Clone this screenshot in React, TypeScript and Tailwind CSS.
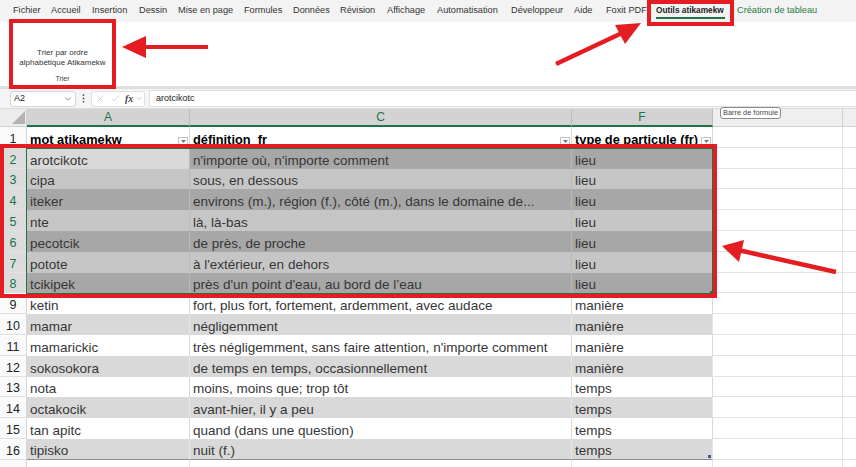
import React from "react";
import { ChevronDown, X, Check } from "lucide-react";

type Row = [string, string, string];

const data: Row[] = [
  ["arotcikotc", "n'importe où, n'importe comment", "lieu"],
  ["cipa", "sous, en dessous", "lieu"],
  ["iteker", "environs (m.), région (f.), côté (m.), dans le domaine de...", "lieu"],
  ["nte", "là, là-bas", "lieu"],
  ["pecotcik", "de près, de proche", "lieu"],
  ["potote", "à l'extérieur, en dehors", "lieu"],
  ["tcikipek", "près d'un point d'eau, au bord de l’eau", "lieu"],
  ["ketin", "fort, plus fort, fortement, ardemment, avec audace", "manière"],
  ["mamar", "négligemment", "manière"],
  ["mamarickic", "très négligemment, sans faire attention, n'importe comment", "manière"],
  ["sokosokora", "de temps en temps, occasionnellement", "manière"],
  ["nota", "moins, moins que; trop tôt", "temps"],
  ["octakocik", "avant-hier, il y a peu", "temps"],
  ["tan apitc", "quand (dans une question)", "temps"],
  ["tipisko", "nuit (f.)", "temps"],
];

const menu: { label: string; cls: string }[] = [
  { label: "Fichier", cls: "w-[38px]" },
  { label: "Accueil", cls: "w-[41px]" },
  { label: "Insertion", cls: "w-[47px]" },
  { label: "Dessin", cls: "w-[39px]" },
  { label: "Mise en page", cls: "w-[66px]" },
  { label: "Formules", cls: "w-[49px]" },
  { label: "Données", cls: "w-[47px]" },
  { label: "Révision", cls: "w-[47px]" },
  { label: "Affichage", cls: "w-[50px]" },
  { label: "Automatisation", cls: "w-[74px]" },
  { label: "Développeur", cls: "w-[63px]" },
  { label: "Aide", cls: "w-[32px]" },
  { label: "Foxit PDF", cls: "w-[50px]" },
];

function FilterBtn() {
  return (
    <div className="w-[10px] h-[10px] mb-[1px] mr-[1px] shrink-0 border border-[#c4c4c4] bg-white flex items-center justify-center">
      <svg width="5" height="3" viewBox="0 0 5 3">
        <path d="M0 0 L5 0 L2.5 3 Z" fill="#777" />
      </svg>
    </div>
  );
}

export default function App() {
  return (
    <div className="relative w-[856px] h-[467px] overflow-hidden bg-white font-['Liberation_Sans',Arial,sans-serif]">
      {/* Menu bar */}
      <div className="h-[22px] bg-[#f3f3f3] flex items-center pl-[13px] text-[9.2px] text-[#333] whitespace-nowrap">
        {menu.map((m) => (
          <div key={m.label} className={m.cls + " shrink-0"}>
            {m.label}
          </div>
        ))}
        <div className="w-[81px] shrink-0 relative">
          <span className="font-bold text-[8.3px] text-[#222]">Outils atikamekw</span>
          <div className="absolute left-0 w-[69px] top-[13px] h-[2px] bg-[#217346]" />
        </div>
        <div className="text-[#1e7b3f]">Création de tableau</div>
      </div>

      {/* Ribbon */}
      <div className="h-[64px] bg-white flex">
        <div className="ml-[10px] w-[105px] h-full flex flex-col items-center text-[#333]">
          <div className="mt-[26px] text-[8px] leading-[10px] text-center">
            Trier par ordre
            <br />
            alphabétique Atikamekw
          </div>
          <div className="mt-auto mb-[3px] text-[7px] leading-[8px] text-[#444]">Trier</div>
        </div>
      </div>
      <div className="h-[3px] bg-[#dedede]" />

      {/* Formula bar */}
      <div className="h-[20px] bg-[#f5f5f5] flex items-center pl-[10px] border-b border-[#dcdcdc]">
        <div className="w-[66px] h-[16px] bg-white border border-[#d6d6d6] rounded-[3px] flex items-center justify-between pl-[3px] pr-[2px] text-[9px] text-[#222]">
          <span>A2</span>
          <ChevronDown size={10} strokeWidth={1.6} color="#555" />
        </div>
        <div className="w-[15px] flex justify-center">
          <svg width="3" height="9" viewBox="0 0 3 9">
            <circle cx="1.5" cy="1.2" r="0.9" fill="#555" />
            <circle cx="1.5" cy="4.5" r="0.9" fill="#555" />
            <circle cx="1.5" cy="7.8" r="0.9" fill="#555" />
          </svg>
        </div>
        <div className="w-[54px] h-[16px] bg-white border border-[#e0e0e0] rounded-[3px] flex items-center pl-[1px]">
          <div className="w-[15px] flex justify-center">
            <X size={11} strokeWidth={1.2} color="#b5b5b5" />
          </div>
          <div className="w-[16px] flex justify-center">
            <Check size={11} strokeWidth={1.2} color="#b5b5b5" />
          </div>
          <div className="w-[13px] flex justify-center font-['Liberation_Serif',serif] italic font-bold text-[10px] text-[#444]">
            fx
          </div>
          <ChevronDown size={9} strokeWidth={1.4} color="#999" />
        </div>
        <div className="flex-1 ml-[4px] h-[17px] bg-white border-l border-y border-[#e0e0e0] flex items-center pl-[6px] text-[9px] text-[#222]">
          arotcikotc
        </div>
      </div>

      {/* Column headers */}
      <div className="h-[18px] flex text-[12px]">
        <div className="w-[27px] shrink-0 bg-[#ececec] border-r border-b border-[#cfcfcf] flex items-end justify-end pr-[1px] pb-[2px]">
          <svg width="13" height="13" viewBox="0 0 13 13">
            <path d="M13 0 L13 13 L0 13 Z" fill="#b3b3b3" />
          </svg>
        </div>
        <div className="w-[163px] shrink-0 bg-[#d3d3d3] border-r border-[#bdbdbd] border-b-2 border-b-[#217346] flex items-center justify-center text-[#217346]">
          A
        </div>
        <div className="w-[382px] shrink-0 bg-[#d3d3d3] border-r border-[#bdbdbd] border-b-2 border-b-[#217346] flex items-center justify-center text-[#217346]">
          C
        </div>
        <div className="w-[141px] shrink-0 bg-[#d3d3d3] border-r border-[#bdbdbd] border-b-2 border-b-[#217346] flex items-center justify-center text-[#217346]">
          F
        </div>
        <div className="w-[130px] shrink-0 bg-[#efefef] border-r border-b border-[#d0d0d0]" />
        <div className="flex-1 bg-[#efefef] border-b border-[#d0d0d0]" />
      </div>

      {/* Row 1: headers */}
      <div className="h-[20.8px] flex whitespace-nowrap">
        <div className="w-[27px] shrink-0 bg-[#fafafa] border-r border-b border-[#d6d6d6] flex items-end justify-center text-[12.5px] leading-[16px] text-[#222]">
          1
        </div>
        <div className="w-[163px] shrink-0 bg-white border-r border-[#d9d9d9] flex items-end justify-between pl-[3px] text-[12.8px] font-bold text-black">
          <span className="leading-[16px]">mot atikamekw</span>
          <FilterBtn />
        </div>
        <div className="w-[382px] shrink-0 bg-white border-r border-[#d9d9d9] flex items-end justify-between pl-[3px] text-[12.8px] font-bold text-black">
          <span className="leading-[16px]">définition_fr</span>
          <FilterBtn />
        </div>
        <div className="w-[141px] shrink-0 bg-white border-r border-[#d9d9d9] flex items-end justify-between pl-[3px] text-[12.8px] font-bold text-black">
          <span className="leading-[16px]">type de particule (fr)</span>
          <FilterBtn />
        </div>
        <div className="w-[130px] shrink-0 border-r border-b border-[#e3e3e3]" />
        <div className="flex-1 border-b border-[#e3e3e3]" />
      </div>

      {/* Data rows */}
      {data.map((r, i) => {
        const n = i + 2;
        const sel = n <= 8;
        const even = n % 2 === 0;
        let bg: string;
        let line: string;
        if (sel) {
          bg = even ? "bg-[#a7a7a7]" : "bg-[#c6c6c6]";
          line = "border-[#bababa]";
        } else {
          bg = even ? "bg-[#d9d9d9]" : "bg-white";
          line = even ? "border-[#e6e6e6]" : "border-[#d9d9d9]";
        }
        const aBg = n === 2 ? "bg-[#d9d9d9]" : bg;
        const last = n === 16 ? " border-b border-b-[#8c8c8c]" : "";
        const rh = sel
          ? "bg-[#dcdcdc] text-[#217346] border-r border-r-[#217346]"
          : "bg-[#fafafa] text-[#222] border-r border-r-[#d6d6d6]";
        return (
          <div key={n} className="h-[20.8px] flex text-[13.5px] leading-[16px] text-[#363636] whitespace-nowrap">
            <div className={"w-[27px] shrink-0 border-b border-b-[#e2e2e2] flex items-end justify-center text-[12.5px] " + rh}>
              {n}
            </div>
            <div className={"w-[163px] shrink-0 border-r pl-[3px] flex items-end " + aBg + " " + line + last}>
              {r[0]}
            </div>
            <div className={"w-[382px] shrink-0 border-r pl-[3px] flex items-end overflow-hidden " + bg + " " + line + last}>
              {r[1]}
            </div>
            <div className={"w-[141px] shrink-0 border-r pl-[3px] flex items-end relative " + bg + " " + line + last}>
              {r[2]}
              {n === 16 && <div className="absolute right-[1px] bottom-[1px] w-[3px] h-[3px] bg-[#3b5aa8]" />}
            </div>
            <div className="w-[130px] shrink-0 border-r border-b border-[#e3e3e3]" />
            <div className="flex-1 border-b border-[#e3e3e3]" />
          </div>
        );
      })}
      <div className="h-[20.8px] flex">
        <div className="w-[27px] shrink-0 bg-[#fafafa] border-r border-[#d6d6d6]" />
        <div className="w-[163px] shrink-0 border-r border-[#e3e3e3]" />
        <div className="w-[382px] shrink-0 border-r border-[#e3e3e3]" />
        <div className="w-[141px] shrink-0 border-r border-[#e3e3e3]" />
        <div className="w-[130px] shrink-0 border-r border-[#e3e3e3]" />
      </div>

      {/* Selection outline */}
      <div className="absolute left-[26px] top-[147.8px] w-[687px] h-[146px] border border-[#217346] pointer-events-none" />
      <div className="absolute left-[710px] top-[291px] w-[4px] h-[4px] bg-[#217346] pointer-events-none" />

      {/* Tooltip */}
      <div className="absolute left-[720px] top-[107px] w-[61px] h-[12px] bg-white border border-[#8a8a8a] rounded-[3px] flex items-center justify-center text-[7.4px] text-[#444] whitespace-nowrap">
        Barre de formule
      </div>

      {/* Red annotations */}
      <div className="absolute left-[9px] top-[19px] w-[107px] h-[70px] border-4 border-[#e31d22] pointer-events-none" />
      <div className="absolute left-[647px] top-0 w-[87px] h-[26px] border-4 border-[#e31d22] pointer-events-none" />
      <div className="absolute left-0 top-[144px] w-[717px] h-[154px] border-4 border-[#e31d22] pointer-events-none" />
      <svg className="absolute inset-0 pointer-events-none" width="856" height="467" viewBox="0 0 856 467">
        <rect x="143" y="45" width="65" height="4" fill="#e31d22" />
        <polygon points="122,47 146,36 146,58" fill="#e31d22" />
        <line x1="556" y1="64" x2="622" y2="33" stroke="#e31d22" strokeWidth="4.5" />
        <polygon points="641,23 615,25 625,44" fill="#e31d22" />
        <line x1="836" y1="272" x2="738" y2="250" stroke="#e31d22" strokeWidth="4.5" />
        <polygon points="722,246 744,240 739,262" fill="#e31d22" />
      </svg>
    </div>
  );
}
